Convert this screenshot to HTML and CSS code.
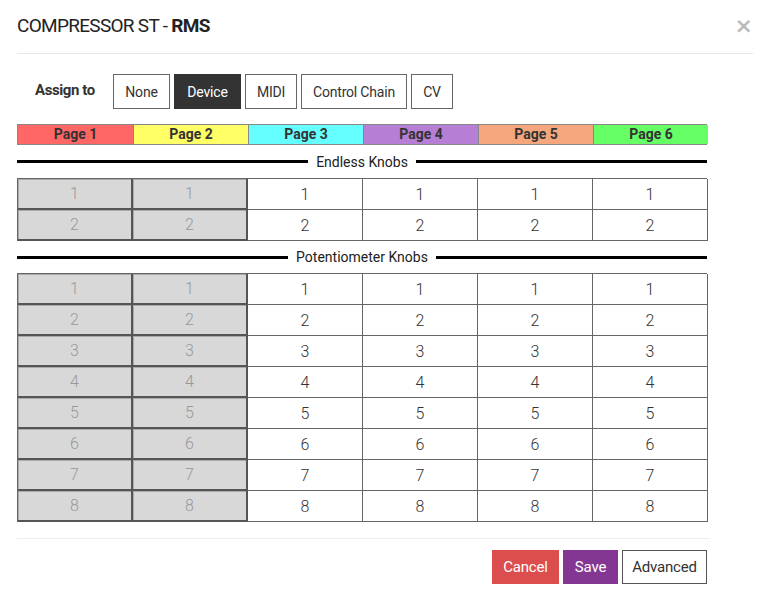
FILE: index.html
```html
<!DOCTYPE html>
<html>
<head>
<meta charset="utf-8">
<link rel="stylesheet" href="styles.css">
</head>
<body>
<div class="modal">
  <div class="header">
    <div class="title">COMPRESSOR ST - <b>RMS</b></div>
    <div class="close">×</div>
  </div>
  <div class="content">
    <div class="assign">
      <span class="assign-label">Assign to</span>
      <div class="btn-group">
        <button class="opt w-none">None</button>
        <button class="opt active w-device">Device</button>
        <button class="opt w-midi">MIDI</button>
        <button class="opt w-cc">Control Chain</button>
        <button class="opt w-cv">CV</button>
      </div>
    </div>
    <div class="pages">
      <div class="page p1">Page 1</div>
      <div class="page p2">Page 2</div>
      <div class="page p3">Page 3</div>
      <div class="page p4">Page 4</div>
      <div class="page p5">Page 5</div>
      <div class="page p6">Page 6</div>
    </div>
    <div class="section"><span>Endless Knobs</span></div>
    <div class="grid">
      <div class="cell off">1</div><div class="cell off">1</div><div class="cell">1</div><div class="cell">1</div><div class="cell">1</div><div class="cell">1</div>
      <div class="cell off">2</div><div class="cell off">2</div><div class="cell">2</div><div class="cell">2</div><div class="cell">2</div><div class="cell">2</div>
    </div>
    <div class="section second"><span>Potentiometer Knobs</span></div>
    <div class="grid">
      <div class="cell off">1</div><div class="cell off">1</div><div class="cell">1</div><div class="cell">1</div><div class="cell">1</div><div class="cell">1</div>
      <div class="cell off">2</div><div class="cell off">2</div><div class="cell">2</div><div class="cell">2</div><div class="cell">2</div><div class="cell">2</div>
      <div class="cell off">3</div><div class="cell off">3</div><div class="cell">3</div><div class="cell">3</div><div class="cell">3</div><div class="cell">3</div>
      <div class="cell off">4</div><div class="cell off">4</div><div class="cell">4</div><div class="cell">4</div><div class="cell">4</div><div class="cell">4</div>
      <div class="cell off">5</div><div class="cell off">5</div><div class="cell">5</div><div class="cell">5</div><div class="cell">5</div><div class="cell">5</div>
      <div class="cell off">6</div><div class="cell off">6</div><div class="cell">6</div><div class="cell">6</div><div class="cell">6</div><div class="cell">6</div>
      <div class="cell off">7</div><div class="cell off">7</div><div class="cell">7</div><div class="cell">7</div><div class="cell">7</div><div class="cell">7</div>
      <div class="cell off">8</div><div class="cell off">8</div><div class="cell">8</div><div class="cell">8</div><div class="cell">8</div><div class="cell">8</div>
    </div>
  </div>
  <div class="footer">
    <button class="fbtn cancel">Cancel</button>
    <button class="fbtn save">Save</button>
    <button class="fbtn advanced">Advanced</button>
  </div>
</div>
</body>
</html>
```
FILE: styles.css
```css
* { box-sizing: border-box; }
body {
  margin: 0;
  background: #fff;
  font-family: Roboto, "Liberation Sans", sans-serif;
  color: #333;
}
.modal { width: 767px; }
.header {
  margin: 0 14px 0 17px;
  height: 54px;
  display: flex;
  align-items: center;
  justify-content: space-between;
  border-bottom: 1px solid #e8e8e8;
  padding-bottom: 2px;
}
.title { font-size: 19px; color: #222; letter-spacing: -0.7px; }
.title b { font-weight: bold; }
.close { font-size: 22px; color: #bbb; font-family: "DejaVu Sans", sans-serif; font-weight: bold; }
.content { padding: 0 17px; width: 724px; }
.assign {
  display: flex;
  align-items: center;
  margin-top: 20px;
  height: 35px;
}
.assign-label { font-weight: bold; font-size: 15px; letter-spacing: -0.4px; margin-left: 18px; width: 78px; margin-top: -4px; }
.btn-group { display: flex; gap: 4px; }
.opt {
  font-family: inherit;
  font-size: 14px;
  letter-spacing: -0.2px;
  height: 35px;
  padding: 0;
  background: #fff;
  color: #333;
  border: 1px solid #666;
  border-radius: 0;
}
.w-none { width: 57px; }
.w-device { width: 67px; }
.w-midi { width: 52px; }
.w-cc { width: 106px; }
.w-cv { width: 42px; }
.opt.active { background: #333; color: #fff; border-color: #333; }
.pages {
  margin-top: 15px;
  display: grid;
  grid-template-columns: repeat(6, 115px);
  border: 1px solid #888;
}
.page {
  height: 19px;
  font-size: 14px;
  font-weight: bold;
  text-align: center;
  line-height: 19px;
  color: #333;
  border-left: 1px solid #888;
}
.page:first-child { border-left: none; }
.p1 { background: #ff6666; }
.p2 { background: #ffff66; }
.p3 { background: #66ffff; }
.p4 { background: #b77ed6; }
.p5 { background: #f4a67c; }
.p6 { background: #66ff66; }
.section {
  display: flex;
  align-items: center;
  gap: 8px;
  height: 33px;
  font-size: 14px;
  color: #222;
}
.section.second { height: 32px; }
.section::before, .section::after {
  content: "";
  flex: 1;
  height: 3px;
  background: #000;
}
.grid {
  display: grid;
  grid-template-columns: repeat(6, 115px);
  grid-auto-rows: 31px;
  border-top: 1px solid #666;
  border-left: 1px solid #666;
}
.cell {
  display: flex;
  align-items: center;
  justify-content: center;
  font-size: 16px;
  color: #333;
  border-right: 1px solid #666;
  border-bottom: 1px solid #666;
  font-weight: 300;
}
.cell.off {
  background: #d8d8d8;
  color: #999;
  border-right: 2px solid #555;
  border-bottom: 2px solid #555;
  box-shadow: inset 1px 1px 0 #aaa;
}
.footer {
  margin: 16px 57px 0 17px;
  border-top: 1px solid #eee;
  padding: 11px 3px 0 0;
  display: flex;
  justify-content: flex-end;
  gap: 4px;
}
.fbtn {
  font-family: inherit;
  font-size: 15px;
  letter-spacing: -0.2px;
  height: 34px;
  padding: 0;
  border-radius: 0;
  border: 1px solid transparent;
}
.cancel { background: #dc4e4d; color: #fff; width: 67px; }
.save { background: #833793; color: #fff; width: 55px; }
.advanced { background: #fff; color: #333; border-color: #555; width: 85px; }
```
